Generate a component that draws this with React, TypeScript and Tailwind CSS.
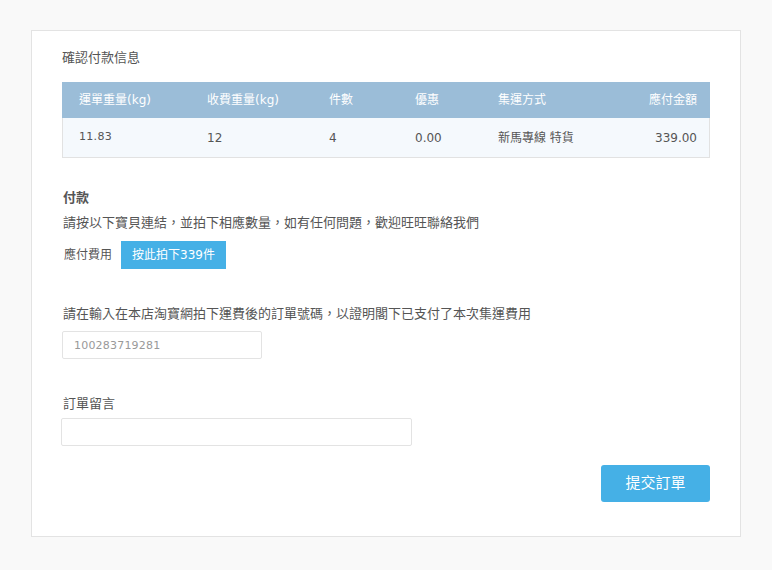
export default function App() {
  const cols = [
    { h: "運單重量(kg)", w: "w-[128px]" },
    { h: "收費重量(kg)", w: "w-[122px]" },
    { h: "件數", w: "w-[86px]" },
    { h: "優惠", w: "w-[83px]" },
    { h: "集運方式", w: "flex-1" },
  ];

  return (
    <div
      className="min-h-[570px] bg-[#f9f9f9] pt-[30px] pl-[31px] pr-[31px] text-[#555]"
      style={{ fontFamily: '"DejaVu Sans", "Noto Sans CJK TC", sans-serif' }}
    >
      <div className="w-[710px] h-[507px] border border-[#e3e3e3] bg-white px-[30px] pt-[18px]">
        {/* 確認付款信息 */}
        <div className="text-[13px] leading-[18px] text-[#555]">確認付款信息</div>

        <div className="mt-[15px] w-[648px]">
          <div className="flex h-[36px] items-center bg-[#9bbdd8] pl-[17px] pr-[13px] text-[12px] text-white">
            {cols.map((c) => (
              <div key={c.h} className={c.w}>
                {c.h}
              </div>
            ))}
            <div className="text-right">應付金額</div>
          </div>
          <div className="flex h-[40px] items-center border border-t-0 border-[#e2e2e2] bg-[#f5f9fd] pl-[16px] pr-[12px] text-[12px] text-[#555]">
            <div className="w-[128px] text-[11px] tracking-[0.3px]">11.83</div>
            <div className="w-[122px]">12</div>
            <div className="w-[86px]">4</div>
            <div className="w-[83px]">0.00</div>
            <div className="flex-1">新馬專線 特貨</div>
            <div className="text-right">339.00</div>
          </div>
        </div>

        {/* 付款 */}
        <div className="mt-[31px] pl-[1px] text-[13px] font-bold leading-[18px]">付款</div>
        <div className="mt-[7px] pl-[1px] text-[13px] leading-[18px]">
          請按以下寶貝連結，並拍下相應數量，如有任何問題，歡迎旺旺聯絡我們
        </div>
        <div className="mt-[9px] flex items-center">
          <span className="w-[59px] pl-[2px] text-[12px]">應付費用</span>
          <button className="h-[28px] w-[105px] bg-[#45b0e6] text-[12px] text-white">
            按此拍下339件
          </button>
        </div>

        {/* 訂單號碼 */}
        <div className="mt-[36px] pl-[1px] text-[13px] leading-[18px]">
          請在輸入在本店淘寶網拍下運費後的訂單號碼，以證明閣下已支付了本次集運費用
        </div>
        <input
          className="mt-[8px] block h-[28px] w-[200px] rounded-[2px] border border-[#e3e3e3] px-[11px] text-[11px] tracking-[0.2px] text-[#555] placeholder:text-[#999] outline-none"
          placeholder="100283719281"
        />

        {/* 訂單留言 */}
        <div className="mt-[36px] pl-[1px] text-[13px] leading-[18px]">訂單留言</div>
        <input className="mt-[5px] -ml-[1px] block h-[28px] w-[351px] rounded-[2px] border border-[#e3e3e3] outline-none" />

        <div className="mt-[19px] flex justify-end">
          <button className="h-[37px] w-[109px] rounded-[3px] bg-[#45b0e6] text-[15px] text-white">
            提交訂單
          </button>
        </div>
      </div>
    </div>
  );
}
